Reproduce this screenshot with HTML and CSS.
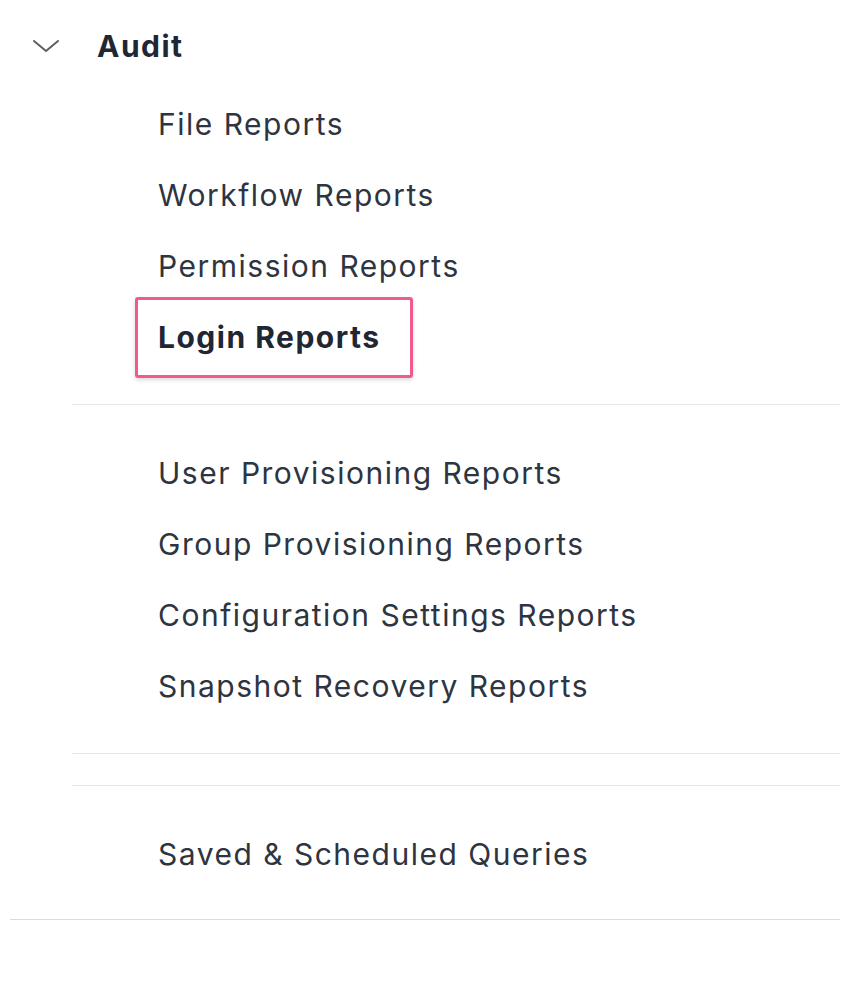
FILE: index.html
```
<!DOCTYPE html>
<html lang="en">
<head>
    <meta charset="UTF-8">
    <meta name="viewport" content="width=device-width, initial-scale=1.0">
    <title>Audit Reports</title>
    <link rel="stylesheet" href="styles.css">
</head>
<body>
    <nav class="sidebar">
        <div class="section">
            <div class="sectionHead">
                <svg class="chevron" width="28" height="16" viewBox="0 0 28 16">
                    <path d="M2 3 L14 13 L26 3" fill="none" stroke="#5b5f66" stroke-width="2" stroke-linecap="round" stroke-linejoin="round"/>
                </svg>
                <span class="sectionTitle">Audit</span>
            </div>
            <ul class="menu first">
                <li><a href="#">File Reports</a></li>
                <li><a href="#">Workflow Reports</a></li>
                <li><a href="#">Permission Reports</a></li>
                <li><a href="#" class="active">Login Reports</a></li>
            </ul>
            <hr class="divider">
            <ul class="menu">
                <li><a href="#">User Provisioning Reports</a></li>
                <li><a href="#">Group Provisioning Reports</a></li>
                <li><a href="#">Configuration Settings Reports</a></li>
                <li><a href="#">Snapshot Recovery Reports</a></li>
            </ul>
            <hr class="divider">
            <div class="spacer"></div>
            <hr class="divider">
            <ul class="menu last">
                <li><a href="#">Saved &amp; Scheduled Queries</a></li>
            </ul>
        </div>
        <hr class="divider full">
    </nav>
</body>
</html>
```

FILE: styles.css
```
/* Reset */
* {
    margin: 0;
    padding: 0;
    box-sizing: border-box;
}

body {
    font-family: 'Inter', 'Noto Sans', sans-serif;
    background-color: #ffffff;
    color: #2c313c;
    padding-top: 10px;
}

.sidebar {
    width: 853px;
}

.sectionHead {
    display: flex;
    align-items: center;
    height: 72px;
    padding-left: 32px;
}

.chevron {
    display: block;
    margin-right: 37px;
}

.sectionTitle {
    font-size: 30px;
    font-weight: 700;
    letter-spacing: 1.5px;
    color: #1f2634;
}

.menu {
    list-style: none;
    padding: 33px 0 31px 158px;
}

.menu.first {
    padding-top: 7px;
}

.menu.last {
    padding-bottom: 29px;
}

.menu li {
    height: 71px;
    line-height: 71px;
}

.menu a {
    position: relative;
    display: inline-block;
    font-size: 30px;
    letter-spacing: 1.5px;
    color: #2e3440;
    text-decoration: none;
}

/* Selected item */
.menu a.active {
    font-weight: 700;
    color: #1f2634;
}

.menu a.active::after {
    content: "";
    position: absolute;
    top: -5px;
    bottom: -5px;
    left: -23px;
    right: -32px;
    border: 3px solid #ee5b8c;
    border-radius: 3px;
    box-shadow: 0 2px 4px rgba(0, 0, 0, 0.15);
}

.divider {
    border: none;
    border-top: 1px solid #e6e7ea;
    margin: 0 13px 0 72px;
}

.spacer {
    height: 31px;
}

.divider.full {
    margin-left: 10px;
    border-top-color: #d9dbdf;
}
```
